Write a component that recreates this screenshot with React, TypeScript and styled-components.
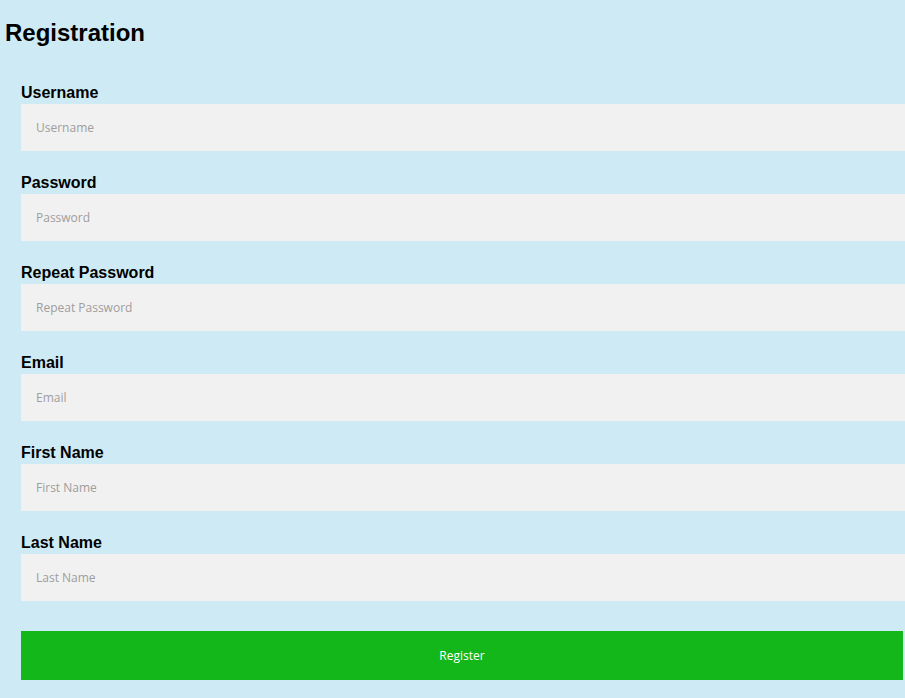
import styled, { createGlobalStyle } from 'styled-components';

const GlobalStyle = createGlobalStyle`
  html, body {
    margin: 0;
    padding: 0;
    overflow: hidden;
    background-color: #ceebf5;
  }
`;

const Page = styled.div`
  padding: 19px 0 0 5px;
  min-height: 698px;
  box-sizing: border-box;
  font-family: "Liberation Sans", Arial, sans-serif;
`;

const Title = styled.h1`
  margin: 0;
  font-size: 24px;
  font-weight: bold;
  color: #000;
`;

const Form = styled.form`
  display: flex;
  flex-direction: column;
  gap: 23px;
  margin-top: 37px;
  padding: 0 2px 0 16px;
`;

const Field = styled.div`
  display: flex;
  flex-direction: column;
`;

const Label = styled.label`
  display: block;
  font-size: 16px;
  line-height: 18px;
  font-weight: bold;
  color: #000;
  margin-bottom: 2px;
`;

const Input = styled.input`
  display: block;
  box-sizing: content-box;
  width: 100%;
  height: 17px;
  padding: 15px;
  border: none;
  outline: none;
  background-color: #f1f1f1;
  font-family: "Open Sans", sans-serif;
  font-size: 12px;
  color: #333;

  &::placeholder {
    color: #a09d9d;
  }
`;

const SubmitButton = styled.button`
  margin-top: 7px;
  height: 49px;
  width: 100%;
  border: none;
  background-color: #13b71a;
  color: #fff;
  font-family: "Open Sans", sans-serif;
  font-size: 12px;
  cursor: pointer;
`;

const fields = [
  { name: 'username', label: 'Username', type: 'text' },
  { name: 'password', label: 'Password', type: 'password' },
  { name: 'repeatPassword', label: 'Repeat Password', type: 'password' },
  { name: 'email', label: 'Email', type: 'email' },
  { name: 'firstName', label: 'First Name', type: 'text' },
  { name: 'lastName', label: 'Last Name', type: 'text' },
];

const App = () => {
  return (
    <Page>
      <GlobalStyle />
      <Title>Registration</Title>
      <Form onSubmit={(e) => e.preventDefault()}>
        {fields.map((field) => (
          <Field key={field.name}>
            <Label htmlFor={field.name}>{field.label}</Label>
            <Input id={field.name} name={field.name} type={field.type} placeholder={field.label} />
          </Field>
        ))}
        <SubmitButton type="submit">Register</SubmitButton>
      </Form>
    </Page>
  );
};

export default App;
